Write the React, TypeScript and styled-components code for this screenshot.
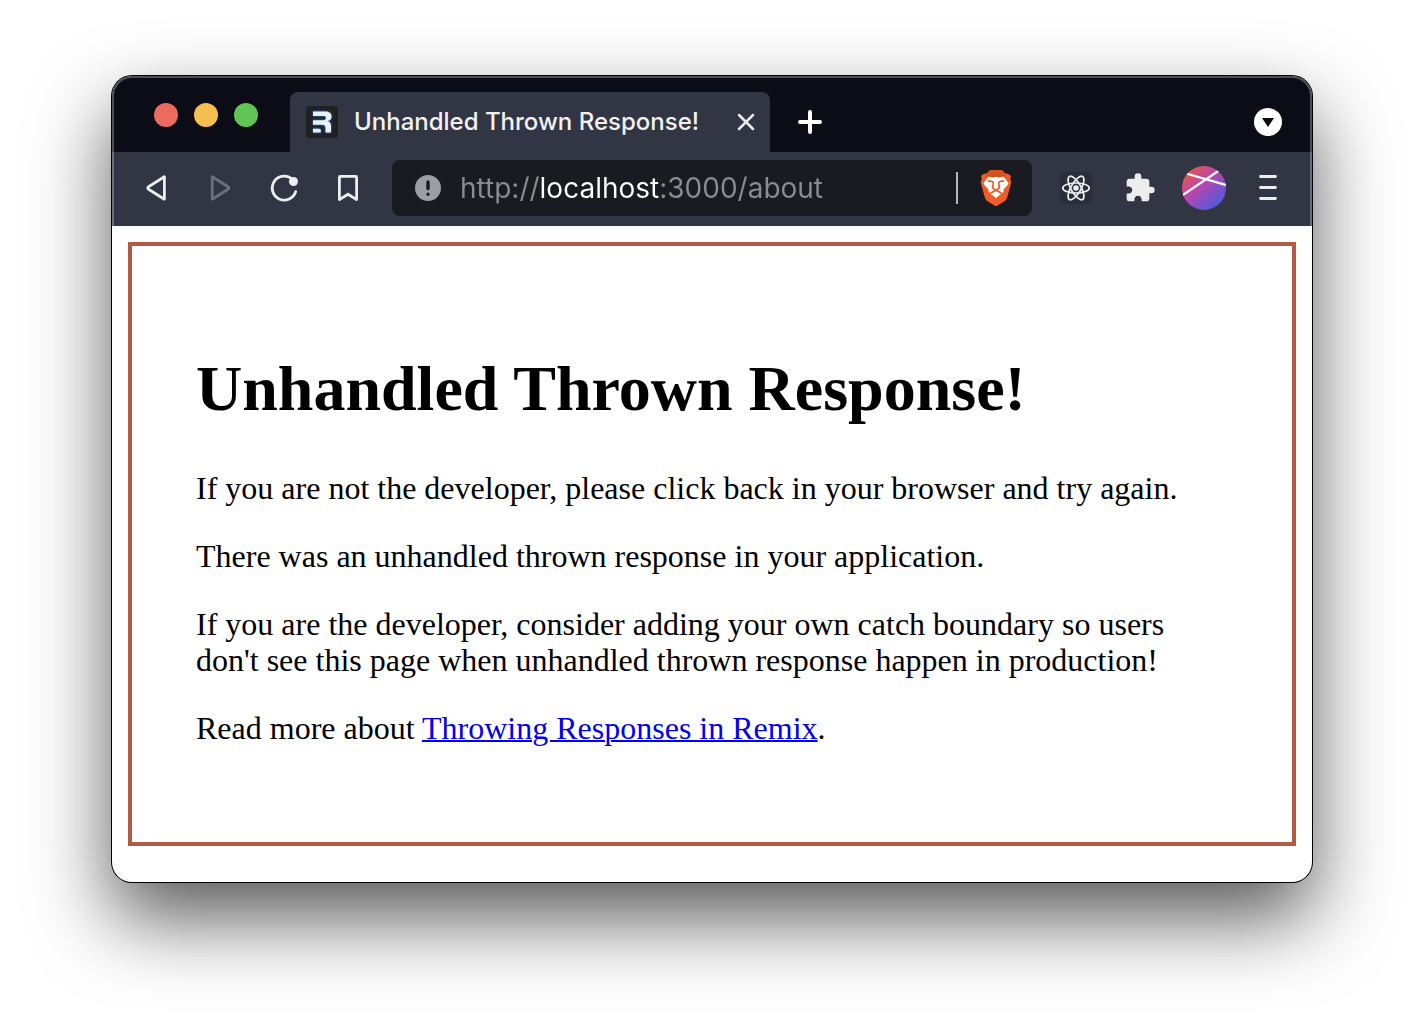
import React from "react";
import styled, { createGlobalStyle } from "styled-components";
import { MdExtension } from "react-icons/md";

const GlobalStyle = createGlobalStyle`
  * { box-sizing: border-box; }
  body { margin: 0; background: #fff; }
`;

const Desktop = styled.div`
  padding: 76px 112px 148px;
  overflow: hidden;
`;

const Window = styled.div`
  border-radius: 20px;
  background: #fff;
  box-shadow: 0 0 0 1px #000, 0 36px 80px rgba(0, 0, 0, 0.66);
`;

const Chrome = styled.header`
  overflow: hidden;
  border-radius: 20px 20px 0 0;
  background: #0b0c15;
  font-family: Inter, "Liberation Sans", sans-serif;
  position: relative;

  &::after {
    content: "";
    position: absolute;
    inset: 0;
    border: 2px solid rgba(255, 255, 255, 0.28);
    border-bottom: 0;
    border-radius: inherit;
    pointer-events: none;
  }
`;

const TabStrip = styled.div`
  display: flex;
  align-items: stretch;
  height: 76px;
  padding: 16px 30px 0 42px;
`;

const Button = styled.button`
  display: flex;
  align-items: center;
  justify-content: center;
  flex: none;
  padding: 0;
  border: 0;
  background: none;
  color: #ededee;
`;

const Lights = styled.div`
  display: flex;
  align-items: center;
  gap: 16px;
  padding: 0 32px 14px 0;
`;

const Light = styled(Button)<{ $color: string }>`
  width: 24px;
  height: 24px;
  border-radius: 50%;
  background: ${(p) => p.$color};
`;

const Tab = styled.div`
  display: flex;
  align-items: center;
  gap: 16px;
  width: 480px;
  padding: 0 12px 0 16px;
  border-radius: 8px 8px 0 0;
  background: #323544;
`;

const TabTitle = styled.span`
  flex: 1;
  overflow: hidden;
  white-space: nowrap;
  color: #f2f2f3;
  font-size: 24px;
  font-weight: 500;
  line-height: 32px;
`;

const CloseButton = styled(Button)`
  width: 24px;
  height: 24px;
`;

const NewTabButton = styled(Button)`
  width: 80px;
  color: #fff;
`;

const TabMenuButton = styled(Button)`
  width: 28px;
  height: 28px;
  margin-left: auto;
  align-self: center;
  border-radius: 50%;
  background: #fff;
  color: #0b0c15;
`;

const Toolbar = styled.div`
  display: flex;
  align-items: center;
  padding: 8px 12px 10px;
  background: #323544;
`;

const ToolButton = styled(Button)`
  width: 64px;
  height: 56px;

  &:disabled { color: #6d707b; }
`;

const AddressBar = styled.form`
  display: flex;
  align-items: center;
  flex: 1;
  min-width: 0;
  height: 56px;
  margin: 0 12px;
  padding: 0 20px;
  border-radius: 8px;
  background: #1a1b20;
`;

/* The host is lit brighter than the scheme and the path. */
const AddressInput = styled.input<{ $hostStart: number; $hostEnd: number }>`
  flex: 1;
  min-width: 0;
  height: 40px;
  margin: 0 16px;
  padding: 0;
  border: 0;
  outline: 0;
  font-family: inherit;
  font-size: 28px;
  line-height: 40px;
  color: #8c8c8e;
  -webkit-text-fill-color: transparent;
  background: linear-gradient(
    90deg,
    #8c8c8e ${(p) => p.$hostStart}px,
    #fff ${(p) => p.$hostStart}px ${(p) => p.$hostEnd}px,
    #8c8c8e ${(p) => p.$hostEnd}px
  );
  background-clip: text;
  -webkit-background-clip: text;
`;

const Divider = styled.span`
  width: 2px;
  height: 32px;
  margin-right: 22px;
  background: #b4b5b8;
`;

const ShieldButton = styled(Button)`
  width: 32px;
  height: 40px;
`;

const ReactTile = styled.span`
  display: flex;
  border-radius: 4px;
  background: #2b2d3a;
`;

const Page = styled.div`
  padding: 16px 16px 36px;
`;

const Main = styled.main`
  padding: 64px;
  border: 4px solid #b35a45;
  color: #000;
  font-family: "Liberation Serif", "Times New Roman", serif;
  font-size: 32px;
  line-height: 36px;
`;

const Title = styled.h1`
  margin: 42px 0 44px;
  font-size: 64px;
  line-height: 74px;
`;

const Paragraph = styled.p`
  margin: 32px 0;
`;

const Link = styled.a`
  color: #0000ee;
  text-decoration: underline;
  text-decoration-thickness: 2px;
`;

const Icon = ({ size = 32, children }: { size?: number; children: React.ReactNode }) => (
  <svg
    width={size}
    height={size}
    viewBox={`0 0 ${size} ${size}`}
    fill="none"
    stroke="currentColor"
    strokeWidth="2.8"
    strokeLinecap="round"
    strokeLinejoin="round"
    aria-hidden="true"
  >
    {children}
  </svg>
);

const Favicon = () => (
  <svg width="32" height="32" viewBox="0 0 32 32" aria-hidden="true">
    <defs>
      <filter id="glow" x="-30%" y="-30%" width="160%" height="160%">
        <feGaussianBlur stdDeviation="1.2" />
      </filter>
      <path
        id="remix"
        d="M7 5.500H19c4 0 6.500 1.800 6.500 5 0 2.600-1.400 4.200-4.200 4.700 2.600.5 3.700 2 3.700 5V26.500H19.500V22c0-2.300-.8-3.200-3-3.200H7V14.200h10.500c1.700 0 2.500-.6 2.500-2.100s-.8-2.100-2.500-2.100H7zM7 22.700h6c1.200 0 1.800.7 1.800 1.800v2H7z"
      />
    </defs>
    <rect width="32" height="32" rx="3" fill="#212121" />
    <use href="#remix" fill="#3b82f6" filter="url(#glow)" />
    <use href="#remix" fill="#e8f2ff" />
  </svg>
);

const Shield = () => (
  <svg width="32" height="36" viewBox="0 0 32 36" aria-hidden="true">
    <path
      d="M10 0h12l3.200 3.600c2.200-.6 3.800-.1 5.800 2.800l-.9 2.400 1.300 3.400-4.200 15.300c-.5 1.600-1.300 2.700-2.700 3.700l-7 4.300q-1.500 1-3 0l-7-4.300c-1.400-1-2.200-2.100-2.700-3.700L.6 12.200l1.300-3.400L1 6.400C3 3.500 4.600 3 6.800 3.600z"
      fill="#ee5c28"
    />
    <path d="M10 0h12l3.200 3.600 1.600 3-4.300-.1-6.500 1-6.500-1-4.300.1 1.600-3z" fill="#d4501f" />
    <path
      d="M8.500 6.800l4.500.8 3-.8 3 .8 4.500-.8 4.700 5.700c.3 1-.1 1.800-.8 2.700l-4.200 4.600c.7 1 .5 2-.3 2.700L16 28l-6.900-5.500c-.8-.7-1-1.700-.3-2.700l-4.200-4.600c-.7-.9-1.100-1.700-.8-2.700z"
      fill="#fff"
    />
    <path
      d="M8 10.600l4.800 1.200.6 1.400-.8 4.600L16 20.300l3.400-2.500-.8-4.600.6-1.400 4.800-1.200M10.200 23.200L16 20.300l5.800 2.900"
      fill="none"
      stroke="#e4561f"
      strokeWidth="1.600"
      strokeLinejoin="round"
    />
  </svg>
);

export default function App() {
  return (
    <>
      <GlobalStyle />
      <Desktop>
        <Window>
          <Chrome>
            <TabStrip>
              <Lights>
                <Light $color="#ed6a5e" aria-label="Close window" />
                <Light $color="#f5bf4f" aria-label="Minimize window" />
                <Light $color="#61c554" aria-label="Zoom window" />
              </Lights>
              <Tab>
                <Favicon />
                <TabTitle>Unhandled Thrown Response!</TabTitle>
                <CloseButton aria-label="Close tab">
                  <Icon size={24}>
                    <path d="M5 5l14 14M19 5L5 19" strokeWidth="2.5" />
                  </Icon>
                </CloseButton>
              </Tab>
              <NewTabButton aria-label="New tab">
                <Icon size={24}>
                  <path d="M12 2v20M2 12h20" strokeWidth="4" />
                </Icon>
              </NewTabButton>
              <TabMenuButton aria-label="Search tabs">
                <Icon size={28}>
                  <path d="M8 10h12l-6 9z" fill="currentColor" stroke="none" />
                </Icon>
              </TabMenuButton>
            </TabStrip>
            <Toolbar>
              <ToolButton aria-label="Back">
                <Icon><path d="M24.400 4.800v22.400L8.500 17.200q-1.500-1.200 0-2.400z" /></Icon>
              </ToolButton>
              <ToolButton aria-label="Forward" disabled>
                <Icon><path d="M8.200 4.800v22.400l15.900-10q1.500-1.200 0-2.400z" /></Icon>
              </ToolButton>
              <ToolButton aria-label="Reload">
                <Icon>
                  <path d="M27.700 19.700A12 12 0 1 1 23 6.200" />
                  <circle cx="25.500" cy="9.500" r="4.500" fill="currentColor" stroke="none" />
                </Icon>
              </ToolButton>
              <ToolButton aria-label="Bookmark">
                <Icon>
                  <path d="M7.400 5.400q0-1 1-1h15.200q1 0 1 1v22.200L16 22.200l-8.600 5.400z" />
                </Icon>
              </ToolButton>
              <AddressBar onSubmit={(e) => e.preventDefault()}>
                <Icon>
                  <circle cx="16" cy="16" r="13" fill="#9a9ea6" stroke="none" />
                  <path d="M16 10v6.500M16 22.200v.1" stroke="#1a1b20" strokeWidth="3.400" />
                </Icon>
                <AddressInput
                  aria-label="Address"
                  defaultValue="http://localhost:3000/about"
                  spellCheck={false}
                  $hostStart={79}
                  $hostEnd={200}
                />
                <Divider />
                <ShieldButton type="button" aria-label="Brave Shields">
                  <Shield />
                </ShieldButton>
              </AddressBar>
              <ToolButton aria-label="React Developer Tools">
                <ReactTile>
                  <Icon>
                    <g strokeWidth="1.700">
                      <ellipse cx="16" cy="16" rx="13.300" ry="5" />
                      <ellipse cx="16" cy="16" rx="13.300" ry="5" transform="rotate(60 16 16)" />
                      <ellipse cx="16" cy="16" rx="13.300" ry="5" transform="rotate(120 16 16)" />
                    </g>
                    <circle cx="16" cy="16" r="2.800" fill="currentColor" stroke="none" />
                  </Icon>
                </ReactTile>
              </ToolButton>
              <ToolButton aria-label="Extensions">
                <MdExtension size={32} />
              </ToolButton>
              <ToolButton aria-label="Profile">
                <svg width="44" height="44" viewBox="0 0 44 44" aria-hidden="true">
                  <defs>
                    <linearGradient id="avatar" x1="0.150" y1="0.100" x2="0.850" y2="0.900">
                      <stop offset="0" stopColor="#e4574f" />
                      <stop offset="0.400" stopColor="#bb45ad" />
                      <stop offset="1" stopColor="#4d5bdc" />
                    </linearGradient>
                    <clipPath id="disc"><circle cx="22" cy="22" r="22" /></clipPath>
                  </defs>
                  <g clipPath="url(#disc)">
                    <rect width="44" height="44" fill="url(#avatar)" />
                    <path d="M4 7.500L45 19.300M0 29.500L37 4.500" stroke="#fff" strokeWidth="2.200" />
                  </g>
                </svg>
              </ToolButton>
              <ToolButton aria-label="Menu">
                <Icon><path d="M8.500 4.500h15M8.500 15.500h15M8.500 26.500h15" /></Icon>
              </ToolButton>
            </Toolbar>
          </Chrome>
          <Page>
            <Main>
              <Title>Unhandled Thrown Response!</Title>
              <Paragraph>
                If you are not the developer, please click back in your browser and try again.
              </Paragraph>
              <Paragraph>There was an unhandled thrown response in your application.</Paragraph>
              <Paragraph>
                If you are the developer, consider adding your own catch boundary so users don't
                see this page when unhandled thrown response happen in production!
              </Paragraph>
              <Paragraph>
                Read more about <Link href="#throwing-responses">Throwing Responses in Remix</Link>.
              </Paragraph>
            </Main>
          </Page>
        </Window>
      </Desktop>
    </>
  );
}
